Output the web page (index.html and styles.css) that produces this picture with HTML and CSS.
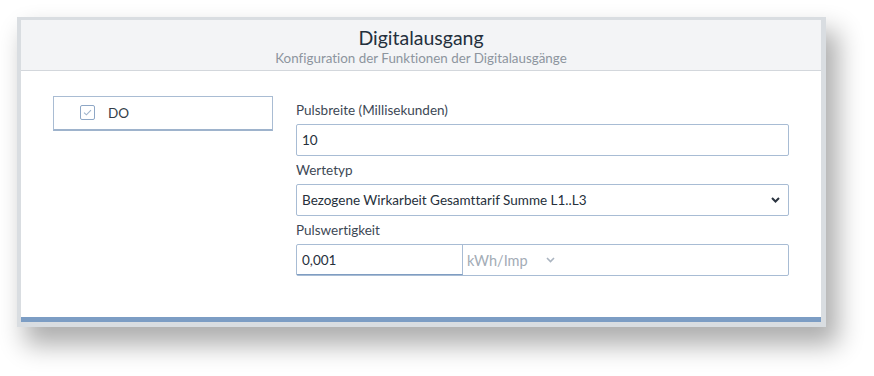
FILE: index.html
```html
<!DOCTYPE html>
<html lang="de">
<head>
<meta charset="utf-8">
<title>Digitalausgang</title>
<link rel="stylesheet" href="styles.css">
</head>
<body>
<div class="frame">
  <div class="card">
    <div class="card-header">
      <h1 class="title">Digitalausgang</h1>
      <div class="subtitle">Konfiguration der Funktionen der Digitalausgänge</div>
    </div>
    <div class="card-body">
      <div class="side">
        <div class="list-item">
          <span class="check">
            <svg width="9" height="7" viewBox="0 0 9 7"><path d="M1 3.6 L3.4 5.8 L8 1.2" fill="none" stroke="#9fb4cc" stroke-width="1.1"/></svg>
          </span>
          <span class="item-label">DO</span>
        </div>
      </div>
      <div class="form">
        <label class="label">Pulsbreite (Millisekunden)</label>
        <div class="input">10</div>
        <label class="label">Wertetyp</label>
        <div class="input select">
          <span>Bezogene Wirkarbeit Gesamttarif Summe L1..L3</span>
          <svg class="chev" width="9" height="6" viewBox="0 0 9 6"><path d="M1 1 L4.5 4.5 L8 1" fill="none" stroke="#2b3440" stroke-width="2"/></svg>
        </div>
        <label class="label">Pulswertigkeit</label>
        <div class="group">
          <div class="group-input">0,001</div>
          <div class="group-select">
            <span>kWh/Imp</span>
            <svg width="9" height="6" viewBox="0 0 9 6"><path d="M1 1 L4.5 4.5 L8 1" fill="none" stroke="#aab4c0" stroke-width="1.6"/></svg>
          </div>
        </div>
      </div>
    </div>
    <div class="card-footer"></div>
  </div>
</div>
</body>
</html>
```
FILE: styles.css
```css
html, body {
  margin: 0;
  padding: 0;
  background: #ffffff;
}
body {
  font-family: "Lato", "Open Sans", sans-serif;
  font-variant-ligatures: none;
  color: #3a4653;
  padding: 17px 0 60px 17px;
}
.frame {
  width: 800px;
  padding: 3px 5px 5px 4px;
  background: #d9dde1;
  box-shadow: 10px 16px 24px 2px rgba(0, 0, 0, 0.32);
}
.card {
  background: #ffffff;
  display: flex;
  flex-direction: column;
}
.card-header {
  height: 50px;
  background: #f3f4f6;
  border-bottom: 1px solid #d3d7dc;
  text-align: center;
}
.title {
  margin: 0;
  padding-top: 6px;
  font-size: 19.5px;
  font-weight: 400;
  line-height: 24px;
  color: #24303d;
}
.subtitle {
  font-size: 13.4px;
  line-height: 16px;
  color: #8d959e;
}
.card-body {
  display: flex;
  gap: 23px;
  padding: 25px 32px 41px 32px;
}
.side {
  width: 220px;
  flex: none;
}
.list-item {
  height: 32px;
  border: 1px solid #a9bcd3;
  border-bottom-width: 2px;
  border-bottom-color: #9eb3cc;
  display: flex;
  align-items: center;
  padding-left: 26px;
}
.check {
  width: 13px;
  height: 13px;
  border: 1px solid #8ea7c6;
  border-radius: 2px;
  display: flex;
  align-items: center;
  justify-content: center;
  margin-top: -2px;
}
.item-label {
  margin-left: 13px;
  font-size: 13.5px;
  color: #333d48;
}
.form {
  flex: 1;
  display: flex;
  flex-direction: column;
  padding-top: 4px;
}
.label {
  font-size: 13.5px;
  line-height: 20px;
  margin-bottom: 4px;
  color: #3d4855;
}
.label + .input { margin-bottom: 4px; }
.input {
  height: 30px;
  border: 1px solid #a8bcd4;
  border-radius: 2px;
  padding: 0 5px;
  display: flex;
  align-items: center;
  font-size: 13.5px;
  color: #26303b;
}
.select {
  justify-content: space-between;
  padding-right: 8px;
}
.group {
  display: flex;
  height: 32px;
  border: 1px solid #a8bcd4;
  border-radius: 2px;
  box-sizing: border-box;
}
.group-input {
  width: 155px;
  border-right: 1px solid #a8bcd4;
  border-bottom: 1px solid #7f9dc2;
  display: flex;
  align-items: center;
  padding: 0 5px;
  font-size: 13.5px;
  color: #26303b;
}
.group-select {
  display: flex;
  align-items: center;
  gap: 18px;
  padding-left: 4px;
  font-size: 14.5px;
  color: #a3acb6;
}
.card-footer {
  height: 5px;
  background: #7c9dc4;
}
```
